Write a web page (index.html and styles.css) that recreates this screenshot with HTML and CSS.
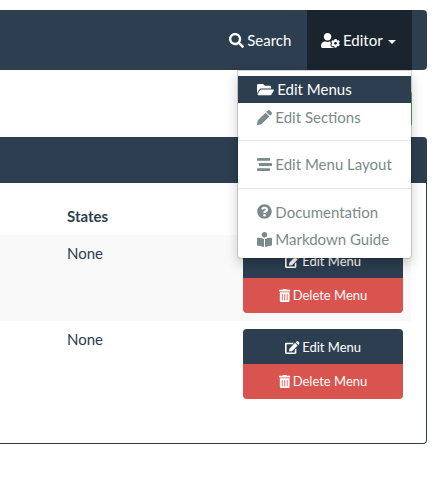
FILE: index.html
```html
<!DOCTYPE html>
<html lang="en">
<head>
<meta charset="utf-8">
<title>Menus</title>
<link rel="stylesheet" href="styles.css">
</head>
<body>
<svg class="sprite" aria-hidden="true">
  <symbol id="edit" viewBox="0 0 576 512"><path d="M402.6 83.2l90.2 90.2c3.8 3.8 3.8 10 0 13.8L274.4 405.6l-92.8 10.3c-12.4 1.4-22.9-9.1-21.5-21.5l10.3-92.8L388.8 83.2c3.8-3.8 10-3.8 13.8 0zm162-22.9l-48.8-48.8c-15.2-15.2-39.9-15.2-55.2 0l-35.4 35.4c-3.8 3.8-3.8 10 0 13.8l90.2 90.2c3.8 3.8 10 3.8 13.8 0l35.4-35.4c15.2-15.3 15.2-40 0-55.2zM384 346.2V448H64V128h229.8c3.2 0 6.2-1.3 8.5-3.5l40-40c7.6-7.6 2.2-20.5-8.5-20.5H48C21.5 64 0 85.5 0 112v352c0 26.5 21.5 48 48 48h352c26.5 0 48-21.5 48-48V306.2c0-10.7-12.9-16-20.5-8.5l-40 40c-2.2 2.3-3.5 5.3-3.5 8.5z"/></symbol>
  <symbol id="trash" viewBox="0 0 448 512"><path fill-rule="evenodd" d="M32 464a48 48 0 0 0 48 48h288a48 48 0 0 0 48-48V128H32zm272-256a16 16 0 0 1 32 0v224a16 16 0 0 1-32 0zm-96 0a16 16 0 0 1 32 0v224a16 16 0 0 1-32 0zm-96 0a16 16 0 0 1 32 0v224a16 16 0 0 1-32 0zM432 32H312l-9.4-18.7A24 24 0 0 0 281.1 0H166.8a23.7 23.7 0 0 0-21.4 13.3L136 32H16A16 16 0 0 0 0 48v32a16 16 0 0 0 16 16h416a16 16 0 0 0 16-16V48a16 16 0 0 0-16-16z"/></symbol>
</svg>

<nav class="navbar">
  <a class="nav-link search"><svg class="icon" viewBox="0 0 512 512"><path d="M505 442.7L405.3 343c-4.5-4.5-10.6-7-17-7H372c27.6-35.3 44-79.7 44-128C416 93.1 322.9 0 208 0S0 93.1 0 208s93.1 208 208 208c48.3 0 92.7-16.4 128-44v16.3c0 6.4 2.5 12.5 7 17l99.7 99.7c9.4 9.4 24.6 9.4 33.9 0l28.3-28.3c9.4-9.4 9.4-24.6.1-34zM208 336c-70.7 0-128-57.2-128-128 0-70.7 57.2-128 128-128 70.7 0 128 57.2 128 128 0 70.7-57.2 128-128 128z"/></svg> Search</a>
  <div class="dropdown">
    <a class="nav-link open"><svg class="icon w-640" viewBox="0 0 640 512"><path d="M610.5 373.3c2.6-14.1 2.6-28.5 0-42.6l25.8-14.9c3-1.7 4.3-5.2 3.3-8.5-6.7-21.6-18.2-41.2-33.2-57.4-2.3-2.5-6-3.1-9-1.4l-25.8 14.9c-10.9-9.3-23.4-16.5-36.9-21.3v-29.8c0-3.4-2.4-6.4-5.7-7.1-22.3-5-45-4.8-66.2 0-3.3.7-5.7 3.7-5.7 7.1v29.8c-13.5 4.8-26 12-36.9 21.3l-25.8-14.9c-2.9-1.7-6.7-1.1-9 1.4-15 16.2-26.5 35.8-33.2 57.4-1 3.3.4 6.8 3.3 8.5l25.8 14.9c-2.6 14.1-2.6 28.5 0 42.6l-25.8 14.9c-3 1.7-4.3 5.2-3.3 8.5 6.7 21.6 18.2 41.1 33.2 57.4 2.3 2.5 6 3.1 9 1.4l25.8-14.9c10.9 9.3 23.4 16.5 36.9 21.3v29.8c0 3.4 2.4 6.4 5.7 7.1 22.3 5 45 4.8 66.2 0 3.3-.7 5.7-3.7 5.7-7.1v-29.8c13.5-4.8 26-12 36.9-21.3l25.8 14.9c2.9 1.7 6.7 1.1 9-1.4 15-16.2 26.5-35.8 33.2-57.4 1-3.3-.4-6.8-3.3-8.5l-25.8-14.9zM496 400.5c-26.8 0-48.5-21.8-48.5-48.5s21.8-48.5 48.5-48.5 48.5 21.8 48.5 48.5-21.7 48.5-48.5 48.5zM224 256c70.7 0 128-57.3 128-128S294.7 0 224 0 96 57.3 96 128s57.3 128 128 128zm201.2 226.5c-2.3-1.2-4.6-2.6-6.8-3.9l-7.9 4.6c-6 3.4-12.8 5.3-19.6 5.3-10.9 0-21.4-4.6-28.9-12.6-18.3-19.8-32.3-43.9-40.2-69.6-5.5-17.7 1.9-36.4 17.9-45.7l7.9-4.6c-.1-2.6-.1-5.2 0-7.8l-7.9-4.6c-16-9.2-23.4-28-17.9-45.7.9-2.9 2.2-5.8 3.2-8.7-3.8-.3-7.5-1.2-11.4-1.2h-16.7c-22.2 10.2-46.9 16-72.9 16s-50.6-5.8-72.9-16h-16.7C60.2 288 0 348.2 0 422.4V464c0 26.5 21.5 48 48 48h352c10.1 0 19.5-3.2 27.2-8.5-1.2-3.8-2-7.7-2-11.8v-9.2z"/></svg> Editor <span class="caret"></span></a>
    <ul class="menu">
      <li class="item active"><svg class="icon w-576" viewBox="0 0 576 512"><path d="M572.7 292.1L500.3 416.2A64 64 0 0 1 445 448H45c-18.5 0-30-20.1-20.7-36.1l72.4-124.2A64 64 0 0 1 152 256h400c18.5 0 30 20.1 20.7 36.1zM152 224h328v-48c0-26.5-21.5-48-48-48H272l-64-64H48C21.5 64 0 85.5 0 112v278l69.1-118.4C86.2 242.3 118 224 152 224z"/></svg> Edit Menus</li>
      <li class="item"><svg class="icon" viewBox="0 0 512 512"><path d="M497.9 142.1l-46.1 46.1c-4.7 4.7-12.3 4.7-17 0l-111-111c-4.7-4.7-4.7-12.3 0-17l46.1-46.1c18.7-18.7 49.1-18.7 67.9 0l60.1 60.1c18.8 18.7 18.8 49.1 0 67.9zM284.2 99.8L21.6 362.4.4 483.9c-2.9 16.4 11.4 30.6 27.8 27.8l121.5-21.3 262.6-262.6c4.7-4.7 4.7-12.3 0-17l-111-111c-4.8-4.7-12.4-4.7-17.1 0z"/></svg> Edit Sections</li>
      <li class="divider"></li>
      <li class="item"><svg class="icon" viewBox="0 0 512 512"><rect x="0" y="32" width="448" height="96" rx="16"/><rect x="64" y="208" width="448" height="96" rx="16"/><rect x="0" y="384" width="448" height="96" rx="16"/></svg> Edit Menu Layout</li>
      <li class="divider"></li>
      <li class="item"><svg class="icon" viewBox="0 0 512 512"><path fill-rule="evenodd" d="M504 256c0 137-111 248-248 248S8 393 8 256C8 119.1 119 8 256 8s248 111.1 248 248zM262.7 90c-54.5 0-89.3 23-116.6 63.8-3.5 5.3-2.4 12.4 2.7 16.2l34.7 26.3c5.2 4 12.6 3 16.7-2.1 17.9-22.7 30.1-35.8 57.3-35.8 20.4 0 45.7 13.1 45.7 33 0 15-12.4 22.6-32.5 33.9C247.100 238.500 216 254.900 216 296v4c0 6.600 5.400 12 12 12h56c6.600 0 12-5.400 12-12v-1.300c0-28.500 83.200-29.700 83.200-106.700 0-58-60.200-102-116.500-102zM256 338c-25.400 0-46 20.600-46 46s20.600 46 46 46 46-20.600 46-46-20.600-46-46-46z"/></svg> Documentation</li>
      <li class="item"><svg class="icon" viewBox="0 0 512 512"><path d="M352 96c0-53-43-96-96-96s-96 43-96 96 43 96 96 96 96-43 96-96zM233.600 241.100c-59.300-36.300-155.400-46.300-203.800-49C13.500 191.100 0 203.500 0 219.100v222.800c0 14.400 11.600 26.300 26.500 27.100 43.700 2.300 132 10.700 193 41.400 9.400 4.700 20.500-1.700 20.500-11.900V252.600c0-4.700-2.300-9-6.400-11.500zm248.600-49c-48.300 2.700-144.500 12.700-203.800 49-4.100 2.500-6.400 7-6.400 11.600v245.800c0 10.200 11.100 16.600 20.500 11.900 61-30.700 149.300-39.100 193-41.400 14.900-.8 26.500-12.700 26.500-27.100V219.100c0-15.600-13.600-28-29.800-27z"/></svg> Markdown Guide</li>
    </ul>
  </div>
</nav>

<div class="toolbar"><button class="btn-new" aria-label="New menu"></button></div>

<section class="panel">
  <header class="panel-heading"></header>
  <div class="panel-body">
    <div class="row head"><div class="cell">States</div></div>
    <div class="row striped">
      <div class="cell">None</div>
      <div class="actions">
        <a class="btn primary"><svg class="icon w-576"><use href="#edit"/></svg> Edit Menu</a>
        <a class="btn danger"><svg class="icon w-448"><use href="#trash"/></svg> Delete Menu</a>
      </div>
    </div>
    <div class="row">
      <div class="cell">None</div>
      <div class="actions">
        <a class="btn primary"><svg class="icon w-576"><use href="#edit"/></svg> Edit Menu</a>
        <a class="btn danger"><svg class="icon w-448"><use href="#trash"/></svg> Delete Menu</a>
      </div>
    </div>
  </div>
</section>
</body>
</html>
```
FILE: styles.css
```css
* { box-sizing: border-box; }

body {
  margin: 0;
  padding: 10px 14px 0 0;
  background: #fff;
  color: #2c3e50;
  font: 15px/21px Lato, sans-serif;
}

.sprite { display: none; }

.icon {
  width: 1em;
  height: 1em;
  margin-right: -.06em;
  vertical-align: -.125em;
  fill: currentColor;
  overflow: visible;
}
.w-448 { width: .875em; }
.w-576 { width: 1.125em; }
.w-640 { width: 1.25em; }

.navbar {
  display: flex;
  justify-content: flex-end;
  height: 60px;
  padding-right: 15px;
  background: #2c3e50;
  border-radius: 0 4px 4px 0;
}

.nav-link {
  display: block;
  height: 60px;
  padding: 20px 15px 19px;
  color: #fff;
  white-space: nowrap;
}
.nav-link.search { padding-right: 15.6px; }
.nav-link.open { width: 105px; padding-right: 14px; padding-left: 14.3px; background: #1a242f; }

.caret {
  display: inline-block;
  margin-left: 2px;
  vertical-align: middle;
  border-top: 4px solid;
  border-right: 4px solid transparent;
  border-left: 4px solid transparent;
}

.dropdown { position: relative; }

.menu {
  position: absolute;
  top: 100%;
  right: 0;
  z-index: 10;
  width: 175px;
  height: 189px;
  margin: 0;
  padding: 5px 0;
  list-style: none;
  background: #fff;
  background-clip: padding-box;
  border: 1px solid rgba(0, 0, 0, .15);
  border-radius: 0 0 4px 4px;
  box-shadow: 0 6px 12px rgba(0, 0, 0, .175);
}

.item {
  padding: 3.3px 19px 2.7px 19.4px;
  line-height: 21.43px;
  color: #7b8a8b;
  white-space: nowrap;
}
.item.active { background: #2c3e50; color: #fff; }

.divider { height: 1px; margin: 9.5px 0; background: #e5e5e5; }

.toolbar {
  display: flex;
  justify-content: flex-end;
  padding: 21px 15px 11px 0;
}

.btn-new {
  width: 110px;
  height: 35px;
  border: 0;
  border-radius: 3px;
  background: #5cb85c;
}

.panel {
  height: 307px;
  border: 1px solid #2c3e50;
  border-left: 0;
  border-radius: 0 4px 4px 0;
}
.panel-heading { height: 45px; background: #2c3e50; }
.panel-body { padding: 15px 15px 0 0; }

.row {
  display: flex;
  justify-content: space-between;
  height: 86px;
  padding: 8px 8px 8px 67px;
}
.row.head { height: 37px; font-weight: 700; }
.row.striped { background: #f9f9f9; }

.actions {
  display: flex;
  flex-direction: column;
  width: 160px;
  border-radius: 4px;
  overflow: hidden;
}

.btn {
  height: 35px;
  font-size: 13px;
  line-height: 35px;
  color: #fff;
  text-align: center;
}
.primary { background: #2c3e50; line-height: 37px; }
.danger { background: #d9534f; }
```
